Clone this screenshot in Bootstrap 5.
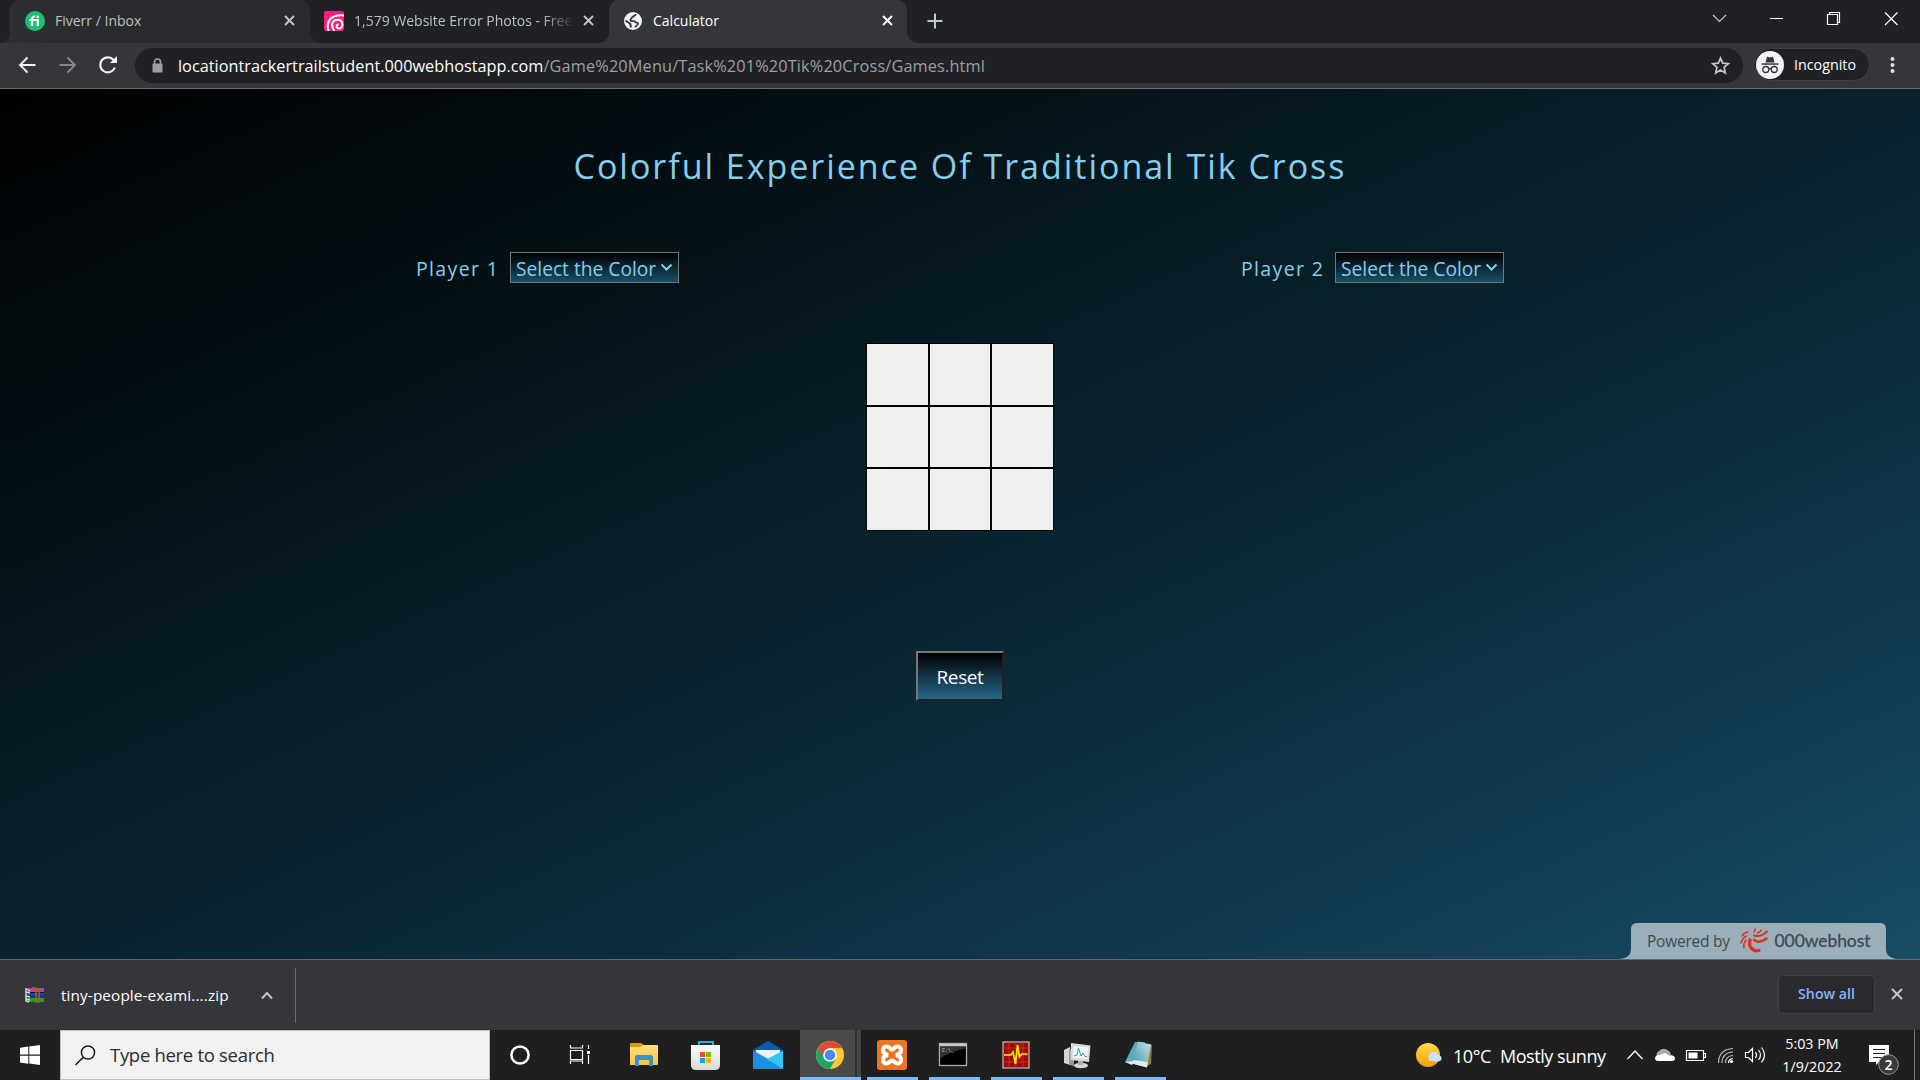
<!DOCTYPE html>
<html lang="en">
<head>
<meta charset="utf-8">
<title>Calculator</title>
<link href="https://cdn.jsdelivr.net/npm/bootstrap@5.3.0/dist/css/bootstrap.min.css" rel="stylesheet">
<style>
body{width:1920px;height:1080px;overflow:hidden;font-family:"Open Sans","Noto Sans",sans-serif;background:#202124;line-height:1}
svg{display:block;flex:none}
.tabstrip{height:43px;background:#202124;padding-left:10px}
.btab{height:43px;width:299px;padding:0 15px 2px 14px;font-size:14px;color:#bdc1c6;position:relative;white-space:nowrap}
.btab .ttl{flex:1;overflow:hidden;margin-left:10px;line-height:22px}
.btab.hov{width:300px;background:linear-gradient(90deg,#2e2f33,#292a2d 30%);border-radius:10px 10px 0 0;padding-left:15px}
.btab.act{width:298px;padding-right:14px;background:#35363a;color:#fff;border-radius:10px 10px 0 0;z-index:2}
.btab.hov::before,.btab.act::before,.btab.hov::after,.btab.act::after{content:"";position:absolute;bottom:0;width:10px;height:10px}
.btab.hov::before,.btab.act::before{left:-10px;background:radial-gradient(circle at 0 0,transparent 9.5px,var(--tc) 10px)}
.btab.hov::after,.btab.act::after{right:-10px;background:radial-gradient(circle at 100% 0,transparent 9.5px,var(--tc) 10px)}
.hov{--tc:#292a2d}.act{--tc:#35363a}
.fade-end{-webkit-mask-image:linear-gradient(90deg,#000 86%,transparent 101%)}
.toolbar{height:46px;background:#35363a;border-bottom:1px solid #6b6d70;padding:5px 16px 0 17px}
.omni{width:1608px;height:35px;border-radius:18px;background:#202124;font-size:16.3px;color:#9aa0a6;white-space:nowrap;padding:0 13px 0 16px}
.u2{letter-spacing:.15px}
.incog{width:116px;height:33px;border-radius:17px;background:#202124;border:1px solid #3e3f43;color:#fff;font-size:14.3px;padding-left:1px;margin-left:11px}
.stage{height:870px;background:linear-gradient(to bottom right,#000 0%,#09222c 50%,#0c2d40 66.7%,#174b66 100%);color:#87ceeb;position:relative;padding-top:56px}
.headline{font-size:34px;letter-spacing:1.98px;line-height:42px;font-weight:400;margin:0;color:#87ceeb;white-space:nowrap}
.players{padding:65px 416px 0}
.plabel{font-size:19.6px;letter-spacing:1.3px;width:94px;white-space:nowrap;padding-top:2px}
.picker{width:169px;height:31px;border:1px solid #767676;background:linear-gradient(#000,#184e68);font-size:19.2px;padding:0 5px 0 5px;white-space:nowrap}
.picker span{padding-top:2px}
.board{width:188px;height:188px;margin:60px auto 0;display:grid;grid-template:repeat(3,1fr)/repeat(3,1fr)}
.board div{background:#efefef;border:1px solid #000}
.resetbtn{width:88px;height:50px;margin:120px auto 0;border:2px solid;border-color:#767676 #212121 #212121 #767676;background:linear-gradient(#000,#25678a);color:#fff;font-size:19px;letter-spacing:-.4px;padding:2px 0 0;display:block;font-family:inherit}
.powered{position:absolute;left:1620px;bottom:0}
.shelf{height:71px;background:#35363a;border-top:1px solid #5c6b73;color:#fff;font-size:15.3px;padding:0 16px 0 25px}
.shelf .zip{letter-spacing:.12px;padding-top:1px}
.shelf .divider{width:1px;height:55px;background:#6c6d70}
.showall{width:97px;height:39px;border:1px solid #414246;border-radius:5px;background:#292a2d;color:#8ab4f8;font-weight:600;font-size:14.2px;margin-bottom:2px}
.taskbar{height:50px;background:#1f1f1f;color:#fff;white-space:nowrap}
.searchbox{width:430px;height:50px;background:#f2f2f2;border:1px solid #c0c0c0;color:#2b2b2b;font-size:18.5px;letter-spacing:-.3px;padding-left:13px}
.app{width:62px;height:50px;position:relative}
.run::after{content:"";position:absolute;left:6px;width:51px;bottom:0;height:3px;background:#76b9ff}
.chromeapp{width:61px;background:linear-gradient(90deg,#4a4a4a 55px,#303030 55px,#303030 57px,#444 57px)}
.chromeapp.run::after{left:0;width:61px}
.weather{font-size:18px;letter-spacing:-.45px;width:171px;padding:2px 0 0 7px}
.deg{width:47px;flex:none}
.clock{font-size:14.3px;line-height:22.5px;width:64px;padding-top:3px;margin-left:1px}
</style>
<script src="https://cdn.jsdelivr.net/npm/bootstrap@5.3.0/dist/js/bootstrap.bundle.min.js"></script>
</head>
<body class="d-flex flex-column">
<div class="tabstrip d-flex flex-shrink-0">
  <div class="btab hov d-flex align-items-center">
    <svg width="20" height="20" viewBox="0 0 20 20"><circle cx="10" cy="10" r="10" fill="#1dbf73"/><path d="M4.500 9h9M7 15V8q0-2.600 3-2.300M12.800 8.200V15" fill="none" stroke="#fff" stroke-width="2.200"/><circle cx="12.800" cy="5.700" r="1.300" fill="#fff"/></svg>
    <span class="ttl">Fiverr / Inbox</span>
    <svg width="11" height="11" viewBox="0 0 11 11"><path d="M1 1l9 9M10 1l-9 9" stroke="#c3c6ca" stroke-width="1.900"/></svg>
  </div>
  <div class="btab d-flex align-items-center">
    <svg width="20" height="20" viewBox="0 0 20 20"><rect width="20" height="20" rx="2" fill="#fc1b80"/><path d="M4.500 20C1 9 9 3 20 4.500" fill="none" stroke="#fff" stroke-width="2"/><path d="M10.500 20C5.500 13 9 8.300 14.500 8.800c5 .7 5 8.700.7 8.700-3.200 0-3.400-3.600-.7-4.300" fill="none" stroke="#fff" stroke-width="2"/></svg>
    <span class="ttl fade-end" style="margin-right:10px">1,579 Website Error Photos - Free</span>
    <svg width="11" height="11" viewBox="0 0 11 11"><path d="M1 1l9 9M10 1l-9 9" stroke="#c3c6ca" stroke-width="1.900"/></svg>
  </div>
  <div class="btab act d-flex align-items-center">
    <svg width="20" height="20" viewBox="0 0 20 20"><circle cx="10" cy="10" r="9" fill="#f1f3f4"/><path d="M12.500 3c.5 2-3 2-3.500 3.500S7 8 7.500 9.500s4-.3 4.500 1.200 2.800.3 3 1.800-1.500 2.500-3 3.500M2.500 9.500l3.500 2.500c1.500.5 2 1.500 1.800 4.500" fill="none" stroke="#35363a" stroke-width="1.900"/></svg>
    <span class="ttl">Calculator</span>
    <svg width="11" height="11" viewBox="0 0 11 11"><path d="M1 1l9 9M10 1l-9 9" stroke="#fff" stroke-width="1.900"/></svg>
  </div>
  <svg class="ms-3" style="margin-top:13px" width="22" height="16" viewBox="0 0 22 16"><path d="M12 .5v15M4.500 8h15" stroke="#c3c6ca" stroke-width="2"/></svg>
  <svg class="ms-auto" width="220" height="40" viewBox="1700 0 220 40"><g fill="none" stroke="#fff" stroke-width="1.200"><path d="M1713 15l6.500 6.500 6.500-6.500" stroke="#c3c6ca"/><path d="M1770 18.500h13M1827.500 14.500h10v10h-10zM1829.500 14.500v-2h10v10h-2M1885 12.500l12.500 12.500M1897.500 12.500l-12.500 12.500"/></g></svg>
</div>
<div class="toolbar d-flex align-items-start flex-shrink-0">
  <svg width="118" height="35" viewBox="17 48 118 35"><g fill="none" stroke-width="1.900"><path d="M35.500 65h-15M27.500 57.500l-7.500 7.500 7.500 7.500" stroke="#f1f3f4"/><path d="M59.500 65h15M67.500 57.500l7.500 7.500-7.500 7.500" stroke="#85878a"/><path d="M114.500 61.500a7.500 7.500 0 1 0 .3 6" stroke="#f1f3f4" stroke-width="2.100"/></g><path d="M117 56v7h-7z" fill="#f1f3f4"/></svg>
  <div class="omni d-flex align-items-center">
    <svg width="13" height="15" viewBox="0 0 13 15"><path d="M3.500 7V4a3 3 0 0 1 6 0v3" fill="none" stroke="#9aa0a6" stroke-width="1.600"/><rect x="1.500" y="5.500" width="10" height="9" rx="1" fill="#9aa0a6"/></svg>
    <span style="margin-left:14px;padding-top:1px"><span class="text-white u1">locationtrackertrailstudent.000webhostapp.com</span><span class="u2">/Game%20Menu/Task%201%20Tik%20Cross/Games.html</span></span>
    <svg class="ms-auto" width="19" height="19" viewBox="0 0 19 19"><path d="M9.500 2l2.200 5.200 5.600.5-4.200 3.700 1.200 5.500-4.800-2.900-4.800 2.900 1.200-5.500L1.700 7.700l5.600-.5z" fill="none" stroke="#c3c6ca" stroke-width="1.700"/></svg>
  </div>
  <div class="incog d-flex align-items-center">
    <svg width="28" height="28" viewBox="0 0 28 28"><circle cx="14" cy="14" r="14" fill="#f1f3f4"/><g fill="#35363a"><path d="M9.500 11.500l1.300-5q.3-1 1.300-.6l1.900.5 1.900-.5q1-.4 1.300.6l1.300 5z"/><rect x="5.500" y="12.300" width="17" height="1.500"/></g><g fill="none" stroke="#35363a" stroke-width="1.300"><circle cx="9.800" cy="18.500" r="3"/><circle cx="18.200" cy="18.500" r="3"/><path d="M12.500 18q1.500-1 3 0"/></g></svg>
    <span style="margin-left:10px;padding-top:2px">Incognito</span>
  </div>
  <svg class="ms-auto" width="26" height="34" viewBox="0 0 26 34"><g fill="#dfe1e5"><circle cx="14.500" cy="11" r="2"/><circle cx="14.500" cy="17" r="2"/><circle cx="14.500" cy="23" r="2"/></g></svg>
</div>
<main class="stage flex-shrink-0">
  <h1 class="headline text-center">Colorful Experience Of Traditional Tik Cross</h1>
  <div class="players d-flex justify-content-between">
    <div class="d-flex align-items-center"><span class="plabel">Player 1</span><div class="picker d-flex align-items-center justify-content-between"><span>Select the Color</span><svg width="13" height="9" viewBox="0 0 13 9"><path d="M1.500 1.500l5 5 5-5" fill="none" stroke="#87ceeb" stroke-width="2"/></svg></div></div>
    <div class="d-flex align-items-center"><span class="plabel">Player 2</span><div class="picker d-flex align-items-center justify-content-between"><span>Select the Color</span><svg width="13" height="9" viewBox="0 0 13 9"><path d="M1.500 1.500l5 5 5-5" fill="none" stroke="#87ceeb" stroke-width="2"/></svg></div></div>
  </div>
  <div class="board"><div></div><div></div><div></div><div></div><div></div><div></div><div></div><div></div><div></div></div>
  <button class="resetbtn">Reset</button>
  <svg class="powered" width="280" height="37" viewBox="1620 922 280 37"><path d="M1620 959q11-1 11-10v-20q0-6 6-6h243q6 0 6 6v20q0 9 12 10z" fill="#9bafba"/><g fill="#404a50" font-size="15.500"><text x="1647" y="947" textLength="83">Powered by</text><text x="1774.500" y="946.500" textLength="96" font-size="17.500" font-family="Lato, sans-serif" stroke="#404a50" stroke-width=".3">000webhost</text></g><g fill="none" stroke="#e0301e" stroke-linecap="round"><path d="M1750 940c-2 7 3 12 9 10.500" stroke-width="3.300"/><path d="M1754 940q5 4 12.500-1.500" stroke-width="2.500"/><path d="M1754 935.500q7 2 13-4" stroke-width="2"/><path d="M1757.500 933q3-1 3.500-3M1754 932q1.500-1.500 1-3" stroke-width="1.400"/><path d="M1746 940q-3 4-2 8M1746.500 936q-4 2-5.500 7M1748 932q-4 .5-6 4" stroke-width="1.400"/></g></svg>
</main>
<div class="shelf d-flex align-items-center flex-shrink-0">
  <svg width="20" height="16" viewBox="0 0 20 16"><rect x="3" y="1" width="16" height="4.500" fill="#b546a8"/><rect x="3" y="5.500" width="16" height="4.500" fill="#2438c8"/><rect x="3" y="10" width="16" height="5" fill="#1f9c2a"/><path d="M3 5.500h16M3 10h16" stroke="#111" stroke-width="1.200"/><path d="M1 1v13l3 1M1 5l4 1M1 9l4 1M1 12l4 1M2 2l3 2" stroke="#ddd" stroke-width="1.400" fill="none"/><path d="M7 0l4 2v13h3V2l-3-1" fill="none" stroke="#a8641c" stroke-width="1.400"/></svg>
  <span class="zip" style="margin-left:16px;width:200px">tiny-people-exami....zip</span>
  <svg width="12" height="9" viewBox="0 0 12 9"><path d="M1 7.500l5-5.500 5 5.500" fill="none" stroke="#c3c6ca" stroke-width="2"/></svg>
  <span class="divider" style="margin-left:22px"></span>
  <div class="showall ms-auto d-flex align-items-center justify-content-center">Show all</div>
  <svg style="margin:0 1px 2px 16px" width="12" height="12" viewBox="0 0 12 12"><path d="M1 1l10 10M11 1l-10 10" stroke="#c8c9cb" stroke-width="1.900"/></svg>
</div>
<div class="taskbar d-flex flex-shrink-0">
  <svg width="60" height="50" viewBox="0 0 60 50"><path d="M20 17.800l8.300-1.200v8H20zM29.300 16.400L40 15v9.600H29.300zM20 25.700h8.300v8L20 32.500zM29.300 25.700H40V35l-10.700-1.400z" fill="#fff"/></svg>
  <div class="searchbox d-flex align-items-center">
    <svg width="22" height="22" viewBox="0 0 22 22"><circle cx="14" cy="8.500" r="6.600" fill="none" stroke="#1b1b1b" stroke-width="1.500"/><path d="M9.300 13.200L1.500 21" stroke="#1b1b1b" stroke-width="1.600"/></svg>
    <span style="margin-left:14px">Type here to search</span>
  </div>
  <svg width="310" height="50" viewBox="490 0 310 50"><defs><linearGradient id="fold" x2="0" y2="1"><stop stop-color="#ffe082"/><stop offset="1" stop-color="#f8c53c"/></linearGradient><linearGradient id="bag" x2="0" y2="1"><stop stop-color="#fff"/><stop offset="1" stop-color="#d8d8d8"/></linearGradient></defs>
    <circle cx="520" cy="25" r="8.600" fill="none" stroke="#fff" stroke-width="2.500"/>
    <path d="M570.500 15v3h12v-3M570.500 34v-3h12v3M570.500 20.500h12v9h-12zM588.500 15v4M588.500 25v9" fill="none" stroke="#fff" stroke-width="1.200"/><rect x="587" y="21" width="3" height="3" fill="#fff"/>
    <path d="M630 14q0-1 1-1h10l3 2v3h-14z" fill="#dd9b0c"/><path d="M630 17h10l4-2h13q1 0 1 1v18q0 1-1 1h-27z" fill="url(#fold)"/><path d="M635 36v-9q0-2 2-2h14q2 0 2 2v9h-4v-6h-10v6z" fill="#3f8fd2"/>
    <path d="M699 17v-5h14v5" fill="none" stroke="#2fa8e8" stroke-width="2"/><path d="M691 15h29v20q0 5-5 5h-19q-5 0-5-5z" fill="url(#bag)"/><path d="M700 22h5v5h-5z" fill="#f25022"/><path d="M706 22h5v5h-5z" fill="#7fba00"/><path d="M700 28h5v5h-5z" fill="#00a4ef"/><path d="M706 28h5v5h-5z" fill="#ffb900"/>
    <path d="M753 20l15-9 15 9v6h-30z" fill="#0a5cae"/><path d="M756 20h24v8l-12 5-12-5z" fill="#f2f2f2"/><path d="M753 20.500l15 8 15-8V39h-30z" fill="#36c5f5"/><path d="M753 20.500L783 39h-30z" fill="#1e8fe0"/>
  </svg>
  <div class="app run chromeapp"><svg width="60" height="50" viewBox="800 0 60 50"><circle cx="830" cy="25" r="14" fill="#fbc934"/><path d="M830 18h12.100A14 14 0 0 0 817.900 18l6 10z" fill="#de4b3e"/><path d="M817.900 18A14 14 0 0 0 830 39l6-10.500-12-1z" fill="#1ea463"/><circle cx="830" cy="25" r="6.800" fill="#fff"/><circle cx="830" cy="25" r="5.300" fill="#4a8af4"/></svg></div>
  <div class="app run"><svg width="60" height="50" viewBox="861 0 60 50"><rect x="877" y="10" width="30" height="30" rx="3" fill="#ee7422"/><path d="M888 25c-7-1.500-6-8.500-1.500-8.500 3.500 0 3.500 3 5.500 3s2-3 5.500-3c4.500 0 5.500 7-1.500 8.500 7 1.500 6 8.500 1.500 8.500-3.500 0-3.500-3-5.500-3s-2 3-5.500 3c-4.500 0-5.500-7 1.500-8.500z" fill="none" stroke="#fff" stroke-width="4"/></svg></div>
  <div class="app run"><svg width="60" height="50" viewBox="923 0 60 50"><rect x="939.500" y="13.500" width="27" height="22" fill="#000" stroke="#a9b0b8" stroke-width="1.300"/><path d="M940 14h26v2.500h-26z" fill="#c2cad0"/><path d="M940 16.500h26v2q-15 2-26 10z" fill="#333"/><text x="942" y="22" font-size="5" fill="#ddd" font-family="Liberation Mono, monospace">C:\_</text></svg></div>
  <div class="app run"><svg width="60" height="50" viewBox="985 0 60 50"><rect x="1003" y="12" width="26" height="26" fill="#9d0b0b" stroke="#ddd" stroke-width="1"/><path d="M1009 12v26M1016 12v26M1023 12v26M1003 18h26M1003 25h26M1003 32h26" stroke="#c93a3a" stroke-width=".8"/><path d="M1004 25h7l2-3 2.500 12 2-19 2 12 2-3h6" fill="none" stroke="#ffea00" stroke-width="1.700"/></svg></div>
  <div class="app run"><svg width="60" height="50" viewBox="1047 0 60 50"><path d="M1064 20l6-3v18l-6-2z" fill="#d5d5d5"/><path d="M1069 19l5 1v16l-5-1z" fill="#999"/><ellipse cx="1081" cy="35.500" rx="7" ry="2.800" fill="#d8d8d8"/><path d="M1078 30h5v5h-5z" fill="#aaa"/><path d="M1071 13l19.500 2.500-1.500 16.500-18.500-2z" fill="#dadada"/><path d="M1073.500 16l14.500 1.500-1 11.500-14-1.500z" fill="#f4f9fd"/><path d="M1074 26l3-1 1.500-7 2.500 8 2-3 2 3.500h2" fill="none" stroke="#3b8fc4"/></svg></div>
  <div class="app run"><svg width="60" height="50" viewBox="1109 0 60 50"><defs><linearGradient id="pad" x1="0" y1="1" x2="1" y2="0"><stop stop-color="#3f93a6"/><stop offset="1" stop-color="#c4e3e8"/></linearGradient></defs><path d="M1148 14l4 1-1 19-4 2z" fill="#98783c"/><path d="M1135 12h10l-8 22-12-2z" fill="#5aaabb"/><path d="M1138 11.500l13 3-4 23-15-4z" fill="url(#pad)"/><path d="M1133.500 30l14.500 2-1.200 5.500-15-4z" fill="#d8edf0"/><path d="M1125 32l9-1-2 4z" fill="#e4f1f3"/></svg></div>
  <svg class="ms-auto" width="34" height="50" viewBox="1412 0 34 50"><defs><linearGradient id="sun" x2="0" y2="1"><stop stop-color="#ffdb45"/><stop offset="1" stop-color="#fa9a16"/></linearGradient></defs><circle cx="1428" cy="25" r="12" fill="url(#sun)"/><path d="M1430 31a4.500 4.500 0 0 1 0-7q2-3.500 6-2 1.500 1 2 2.800 4 1 3.500 4-.5 2.700-3.500 2.700z" fill="#c3e6fb"/></svg>
  <div class="weather d-flex align-items-center"><span class="deg">10°C</span><span>Mostly sunny</span></div>
  <svg width="162" height="50" viewBox="1617 0 162 50"><path d="M1627.500 29l7.500-8 7.500 8" fill="none" stroke="#fff" stroke-width="1.300"/><path d="M1657 27a5 5 0 0 1 2-6q5-5 11 1l1 3-12 6z" fill="#a9a9a9"/><path d="M1658 31q-3-.5-3-3 .5-3 4-3l6-2q2 1 4 2.500 5-1 6 2.500 0 3-3 3z" fill="#fff"/>
  <path d="M1686.500 20.500h17v10h-17zM1704 23.500h1.500v4h-1.500" fill="none" stroke="#fff" stroke-width="1.200"/><rect x="1688.500" y="22.500" width="9" height="6" fill="#fff"/>
  <g fill="none" stroke="#fff" stroke-width="1.200"><path d="M1718.500 33q0-13.500 14.500-14.500M1722 33q0-10.500 11-11M1725.500 33q0-7 7.500-7.500" stroke="#bbb"/><path d="M1728.500 33q0-4 4.500-4.500"/><path d="M1745.500 22.500h3l4-4v13l-4-4h-3zM1755.500 22q2 3 0 6M1758.500 20q4 5 0 10M1761.500 17.500q6 7.500 0 15"/></g><circle cx="1731.500" cy="31.500" r="1.600" fill="#fff"/></svg>
  <div class="clock text-center"><div>5:03 PM</div><div>1/9/2022</div></div>
  <svg width="76" height="50" viewBox="1844 0 76 50"><path d="M1869 15h20v17h-10l-3 3v-3h-7z" fill="#fff"/><path d="M1873 19.500h12M1873 23.500h12M1873 27.500h9" stroke="#1f1f1f" stroke-width="1.200"/><circle cx="1888.500" cy="34.500" r="9.800" fill="#3a3a3a" stroke="#999" stroke-width="1"/><text x="1888.500" y="39.500" text-anchor="middle" font-size="14" font-weight="600" fill="#fff">2</text><path d="M1914.500 0v50" stroke="#777" stroke-width="1"/></svg>
</div>
</body>
</html>
